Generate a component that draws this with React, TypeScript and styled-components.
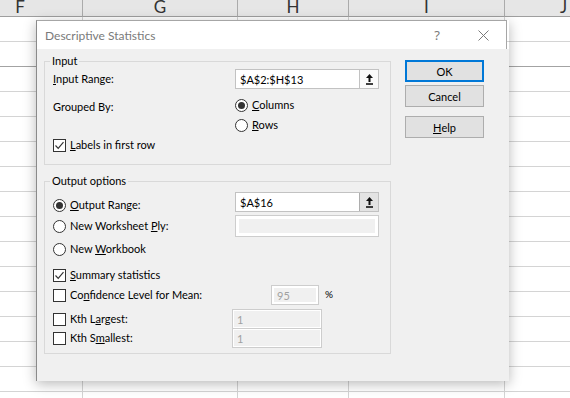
import styled, { createGlobalStyle } from "styled-components";

const GlobalStyle = createGlobalStyle`
  html, body {
    margin: 0;
    padding: 0;
  }
  body {
    background: #fff;
    font-family: "Lato", "Noto Sans", sans-serif;
  }
  * {
    box-sizing: border-box;
  }
`;

const Page = styled.div`
  position: relative;
  width: 570px;
  height: 398px;
  overflow: hidden;
  background: #fff;
`;

const Sheet = styled.div`
  display: grid;
  grid-template-columns: 125px 155px 111px 156px 118px;
  grid-template-rows: 17px;
  grid-auto-rows: 25px;
  width: 665px;
  margin-left: -42px;
`;

const ColHead = styled.div`
  display: flex;
  justify-content: center;
  align-items: flex-start;
  background: #e6e6e6;
  border-right: 1px solid #ababab;
  border-bottom: 1px solid #9f9f9f;
  color: #333;
  font-family: "Lato", sans-serif;
  font-size: 17px;
  line-height: 13px;
`;

const Cell = styled.div<{ $strong?: boolean }>`
  border-right: 1px solid #d4d4d4;
  border-bottom: 1px solid ${(p) => (p.$strong ? "#a3a3a3" : "#d4d4d4")};
`;

const Dialog = styled.div`
  position: absolute;
  left: 36px;
  top: 20px;
  width: 473px;
  box-shadow: 0 3px 12px rgba(0, 0, 0, 0.28);
`;

const TitleBar = styled.div`
  display: flex;
  align-items: center;
  width: 471px;
  height: 29px;
  padding-left: 8px;
  background: #fff;
  border: 1px solid #a6a6a6;
  border-bottom: none;
  border-left-color: #8a8a8a;
`;

const Title = styled.div`
  flex: 1;
  color: #7a7a7a;
  font-size: 12px;
`;

const TitleButton = styled.div`
  display: flex;
  justify-content: center;
  align-items: center;
  width: 46px;
  height: 28px;
  color: #7a7a7a;
  font-family: "Noto Sans", sans-serif;
  font-size: 13px;
`;

const Body = styled.div`
  display: flex;
  align-items: flex-start;
  gap: 14px;
  height: 332px;
  padding: 4px 0 0 7px;
  background: #f0f0f0;
  border-left: 1px solid #8a8a8a;
`;

const Groups = styled.div`
  display: flex;
  flex-direction: column;
  gap: 8px;
  width: 347px;
`;

const Group = styled.fieldset<{ $pb: number }>`
  margin: 0;
  min-width: 0;
  padding: 0 8px ${(p) => p.$pb}px 8px;
  border: 1px solid #d9d9d9;
`;

const GroupTitle = styled.legend`
  margin-left: -3px;
  padding: 0 2px;
  font-size: 11px;
  line-height: 16px;
  color: #000;
`;

const Row = styled.div<{ $h?: number; $mt?: number; $top?: boolean }>`
  display: flex;
  align-items: ${(p) => (p.$top ? "flex-start" : "center")};
  height: ${(p) => p.$h ?? 20}px;
  margin-top: ${(p) => p.$mt ?? 0}px;
`;

const Label = styled.div<{ $w: number; $mt?: number }>`
  flex-shrink: 0;
  width: ${(p) => p.$w}px;
  margin-top: ${(p) => p.$mt ?? 0}px;
  font-size: 11px;
  line-height: 16px;
  color: #000;
`;

const Option = styled.div<{ $w?: number; $shift?: number }>`
  display: flex;
  flex-shrink: 0;
  align-items: center;
  gap: 4px;
  width: ${(p) => (p.$w ? `${p.$w}px` : "auto")};
  margin-top: ${(p) => p.$shift ?? 0}px;
  font-size: 11px;
  line-height: 16px;
  color: #000;
`;

const Stack = styled.div`
  display: flex;
  flex-direction: column;
`;

const StackItem = styled.div`
  display: flex;
  align-items: center;
  height: 20px;
`;

const Box = styled.span`
  display: inline-flex;
  justify-content: center;
  align-items: center;
  width: 13px;
  height: 13px;
  background: #fff;
  border: 1px solid #333;
`;

const Dot = styled.span<{ $on?: boolean }>`
  display: inline-flex;
  justify-content: center;
  align-items: center;
  width: 13px;
  height: 13px;
  border-radius: 50%;
  background: #fff;
  border: 1px solid #333;
  &::after {
    content: "";
    display: ${(p) => (p.$on ? "block" : "none")};
    width: 7px;
    height: 7px;
    border-radius: 50%;
    background: #333;
  }
`;

const Field = styled.div<{ $w: number; $h?: number; $off?: boolean; $ring?: number }>`
  display: flex;
  align-items: center;
  flex-shrink: 0;
  width: ${(p) => p.$w}px;
  height: ${(p) => p.$h ?? 20}px;
  padding-left: ${(p) => (p.$off ? (p.$ring ?? 2) + 3 : 4)}px;
  background: ${(p) => (p.$off ? "#f0f0f0" : "#fff")};
  border: 1px solid ${(p) => (p.$off ? "#cdcdcd" : "#c2c2c2")};
  box-shadow: ${(p) => (p.$off ? `inset 0 0 0 ${p.$ring ?? 2}px #fff` : "none")};
  color: ${(p) => (p.$off ? "#a0a0a0" : "#000")};
  font-size: 11px;
`;

const FieldText = styled.span`
  flex: 1;
`;

const Pick = styled.div<{ $pressed?: boolean }>`
  display: flex;
  justify-content: center;
  align-items: center;
  align-self: stretch;
  width: 19px;
  background: ${(p) => (p.$pressed ? "#e3e3e3" : "#fafafa")};
  border-left: 1px solid ${(p) => (p.$pressed ? "#adadad" : "#c2c2c2")};
`;

const Percent = styled.span`
  margin-left: 6px;
  margin-top: -2px;
  font-size: 10px;
  color: #000;
`;

const Buttons = styled.div`
  display: flex;
  flex-direction: column;
  margin-top: 7px;
`;

const Button = styled.div<{ $primary?: boolean; $mt?: number }>`
  display: flex;
  justify-content: center;
  align-items: center;
  width: 79px;
  height: 22px;
  margin-top: ${(p) => p.$mt ?? 0}px;
  background: #e1e1e1;
  border: 1px solid ${(p) => (p.$primary ? "#0078d7" : "#adadad")};
  box-shadow: ${(p) => (p.$primary ? "inset 0 0 0 1px #0078d7" : "none")};
  font-size: 11px;
  color: #000;
`;

const Check = () => (
  <svg width="11" height="11" viewBox="0 0 11 11">
    <polyline points="1.5,5.5 4.2,8.3 9.5,2.2" fill="none" stroke="#333" strokeWidth="1.2" />
  </svg>
);

const PickIcon = () => (
  <svg width="7" height="11" viewBox="0 0 7 11">
    <polygon points="3.5,0 7,4 4.5,4 4.5,8 2.5,8 2.5,4 0,4" fill="#111" />
    <rect x="0" y="9.2" width="7" height="1.6" fill="#111" />
  </svg>
);

const CloseIcon = () => (
  <svg width="11" height="11" viewBox="0 0 11 11">
    <path d="M0.5 0.5 L10.5 10.5 M10.5 0.5 L0.5 10.5" stroke="#7a7a7a" strokeWidth="1" />
  </svg>
);

const columns = ["F", "G", "H", "I", "J"];
const rowCount = 16;

export default function App() {
  return (
    <Page>
      <GlobalStyle />
      <Sheet>
        {columns.map((c) => (
          <ColHead key={c}>{c}</ColHead>
        ))}
        {Array.from({ length: rowCount }).map((_, r) =>
          columns.map((c) => <Cell key={`${r}-${c}`} $strong={r === 1} />)
        )}
      </Sheet>

      <Dialog>
        <TitleBar>
          <Title>Descriptive Statistics</Title>
          <TitleButton>?</TitleButton>
          <TitleButton>
            <CloseIcon />
          </TitleButton>
        </TitleBar>
        <Body>
          <Groups>
            <Group $pb={9}>
              <GroupTitle>Input</GroupTitle>
              <Row>
                <Label $w={182}>
                  <u>I</u>nput Range:
                </Label>
                <Field $w={144}>
                  <FieldText>$A$2:$H$13</FieldText>
                  <Pick>
                    <PickIcon />
                  </Pick>
                </Field>
              </Row>
              <Row $h={40} $mt={6} $top>
                <Label $w={182} $mt={4}>
                  Grouped By:
                </Label>
                <Stack>
                  <StackItem>
                    <Option>
                      <Dot $on />
                      <span>
                        <u>C</u>olumns
                      </span>
                    </Option>
                  </StackItem>
                  <StackItem>
                    <Option>
                      <Dot />
                      <span>
                        <u>R</u>ows
                      </span>
                    </Option>
                  </StackItem>
                </Stack>
              </Row>
              <Row>
                <Option>
                  <Box>
                    <Check />
                  </Box>
                  <span>
                    <u>L</u>abels in first row
                  </span>
                </Option>
              </Row>
            </Group>

            <Group $pb={5}>
              <GroupTitle>Output options</GroupTitle>
              <Row $mt={3}>
                <Option $w={182} $shift={6}>
                  <Dot $on />
                  <span>
                    <u>O</u>utput Range:
                  </span>
                </Option>
                <Field $w={144}>
                  <FieldText>$A$16</FieldText>
                  <Pick $pressed>
                    <PickIcon />
                  </Pick>
                </Field>
              </Row>
              <Row $h={22} $mt={3}>
                <Option $w={182}>
                  <Dot />
                  <span>
                    New Worksheet <u>P</u>ly:
                  </span>
                </Option>
                <Field $w={144} $h={22} $off $ring={3} />
              </Row>
              <Row $mt={2}>
                <Option $w={182}>
                  <Dot />
                  <span>
                    New <u>W</u>orkbook
                  </span>
                </Option>
              </Row>
              <Row $mt={6}>
                <Option>
                  <Box>
                    <Check />
                  </Box>
                  <span>
                    <u>S</u>ummary statistics
                  </span>
                </Option>
              </Row>
              <Row>
                <Option $w={218}>
                  <Box />
                  <span>
                    Co<u>n</u>fidence Level for Mean:
                  </span>
                </Option>
                <Field $w={48} $off>
                  95
                </Field>
                <Percent>%</Percent>
              </Row>
              <Row $mt={4}>
                <Option $w={179}>
                  <Box />
                  <span>
                    Kth L<u>a</u>rgest:
                  </span>
                </Option>
                <Field $w={90} $off $ring={1}>
                  1
                </Field>
              </Row>
              <Row $mt={-1}>
                <Option $w={179}>
                  <Box />
                  <span>
                    Kth S<u>m</u>allest:
                  </span>
                </Option>
                <Field $w={90} $off $ring={1}>
                  1
                </Field>
              </Row>
            </Group>
          </Groups>

          <Buttons>
            <Button $primary>OK</Button>
            <Button $mt={3}>Cancel</Button>
            <Button $mt={9}>
              <u>H</u>elp
            </Button>
          </Buttons>
        </Body>
      </Dialog>
    </Page>
  );
}
